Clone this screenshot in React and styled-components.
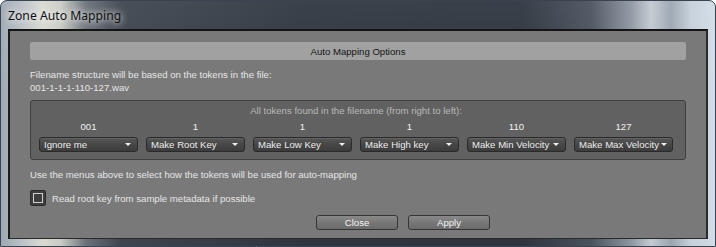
import React from 'react';
import styled, {createGlobalStyle} from 'styled-components';

const GlobalStyle = createGlobalStyle`
  html, body {
    margin: 0;
    padding: 0;
    background: #ffffff;
  }
`

const tokens = [
    {value: '001', action: 'Ignore me'},
    {value: '1', action: 'Make Root Key'},
    {value: '1', action: 'Make Low Key'},
    {value: '1', action: 'Make High key'},
    {value: '110', action: 'Make Min Velocity'},
    {value: '127', action: 'Make Max Velocity'},
]

const Window = styled.div`
  width: 716px;
  height: 247px;
  box-sizing: border-box;
  display: flex;
  flex-direction: column;
  border-radius: 7px 7px 0 0;
  border: 1px solid #3a4350;
  background:
    linear-gradient(180deg, rgba(255,255,255,0.06) 0%, rgba(0,0,0,0) 40%),
    linear-gradient(90deg,
      #9ea8b2 0px, #b9c0c6 20px, #d9dad2 42px, #c9ccc4 60px, #6a717a 85px,
      #3e454e 120px, #2f363f 300px, #2d343e 520px, #4a525d 590px,
      #8d96a1 630px, #c3cad1 650px, #9ba5b0 670px, #c6d0da 690px, #d3dde7 716px);
`

const TitleBar = styled.div`
  height: 28px;
  display: flex;
  align-items: center;
  padding-left: 7px;
  flex-shrink: 0;
`

const Title = styled.span`
  font-family: "Noto Sans", "Open Sans", sans-serif;
  font-size: 12.2px;
  color: #111;
  text-shadow: 0 0 6px rgba(255,255,255,0.9), 0 0 10px rgba(255,255,255,0.6);
`

const Client = styled.div`
  flex: 1;
  margin: 0 7px 7px 7px;
  background: #797979;
  border-top: 2px solid #141414;
  border-left: 2px solid #1c1c1c;
  border-right: 2px solid #2a2a2a;
  border-bottom: 1px solid #2a2a2a;
  padding: 11px 20px 0 20px;
  display: flex;
  flex-direction: column;
  font-family: "Liberation Sans", Arial, sans-serif;
  font-size: 9.6px;
  color: #e6e6e6;
`

const Header = styled.div`
  height: 18px;
  border-radius: 2px;
  background: #a1a1a1;
  color: #151515;
  display: flex;
  align-items: center;
  justify-content: center;
`

const Info = styled.div`
  margin-top: 8px;
  line-height: 13px;
`

const Panel = styled.div`
  margin-top: 6px;
  height: 60px;
  box-sizing: border-box;
  background: #616161;
  border: 1px solid #3f3f3f;
  border-radius: 3px;
  padding: 4px 12px 0 8px;
  display: flex;
  flex-direction: column;
`

const PanelCaption = styled.div`
  text-align: center;
  color: #b8b8b8;
  line-height: 12px;
`

const TokenGrid = styled.div`
  margin-top: 4px;
  display: grid;
  grid-template-columns: repeat(6, 99px);
  column-gap: 8px;
`

const TokenCol = styled.div`
  display: flex;
  flex-direction: column;
  align-items: stretch;
`

const TokenValue = styled.div`
  text-align: center;
  line-height: 12px;
  color: #f0f0f0;
`

const Select = styled.div`
  margin-top: 4px;
  height: 15px;
  box-sizing: border-box;
  border: 1px solid #2a2a2a;
  border-radius: 3px;
  background: linear-gradient(180deg, #575757 0%, #474747 50%, #3c3c3c 100%);
  box-shadow: inset 0 1px 0 rgba(255,255,255,0.08);
  display: flex;
  align-items: center;
  justify-content: space-between;
  padding: 0 4px 0 4px;
  color: #ececec;
  white-space: nowrap;
`

const Arrow = styled.span`
  width: 0;
  height: 0;
  border-left: 3px solid transparent;
  border-right: 3px solid transparent;
  border-top: 3px solid #f0f0f0;
  margin-left: 2px;
  margin-right: 2px;
`

const Hint = styled.div`
  margin-top: 9px;
  line-height: 12px;
`

const CheckRow = styled.label`
  margin-top: 9px;
  display: flex;
  align-items: center;
  gap: 6px;
`

const CheckBox = styled.span`
  width: 16px;
  height: 16px;
  box-sizing: border-box;
  border-radius: 2px;
  border: 1px solid #2c2c2c;
  background: #3d3d3d;
  display: flex;
  align-items: center;
  justify-content: center;
  &::after {
    content: '';
    width: 8px;
    height: 8px;
    border: 1px solid #cfcfcf;
  }
`

const ButtonRow = styled.div`
  margin-top: 9px;
  display: flex;
  gap: 10px;
  padding-left: 286px;
`

const Button = styled.div`
  width: 82px;
  height: 15px;
  box-sizing: border-box;
  border: 1px solid #353535;
  border-radius: 3px;
  background: linear-gradient(180deg, #8a8a8a 0%, #777 50%, #6c6c6c 100%);
  display: flex;
  align-items: center;
  justify-content: center;
  color: #f4f4f4;
`

const App = () => {
    return (
        <>
            <GlobalStyle/>
            <Window>
                <TitleBar>
                    <Title>Zone Auto Mapping</Title>
                </TitleBar>
                <Client>
                    <Header>Auto Mapping Options</Header>
                    <Info>
                        Filename structure will be based on the tokens in the file:<br/>
                        001-1-1-1-110-127.wav
                    </Info>
                    <Panel>
                        <PanelCaption>All tokens found in the filename (from right to left):</PanelCaption>
                        <TokenGrid>
                            {tokens.map((t, i) => (
                                <TokenCol key={i}>
                                    <TokenValue>{t.value}</TokenValue>
                                    <Select>{t.action}<Arrow/></Select>
                                </TokenCol>
                            ))}
                        </TokenGrid>
                    </Panel>
                    <Hint>Use the menus above to select how the tokens will be used for auto-mapping</Hint>
                    <CheckRow>
                        <CheckBox/>
                        Read root key from sample metadata if possible
                    </CheckRow>
                    <ButtonRow>
                        <Button>Close</Button>
                        <Button>Apply</Button>
                    </ButtonRow>
                </Client>
            </Window>
        </>
    );
}

export default App;
